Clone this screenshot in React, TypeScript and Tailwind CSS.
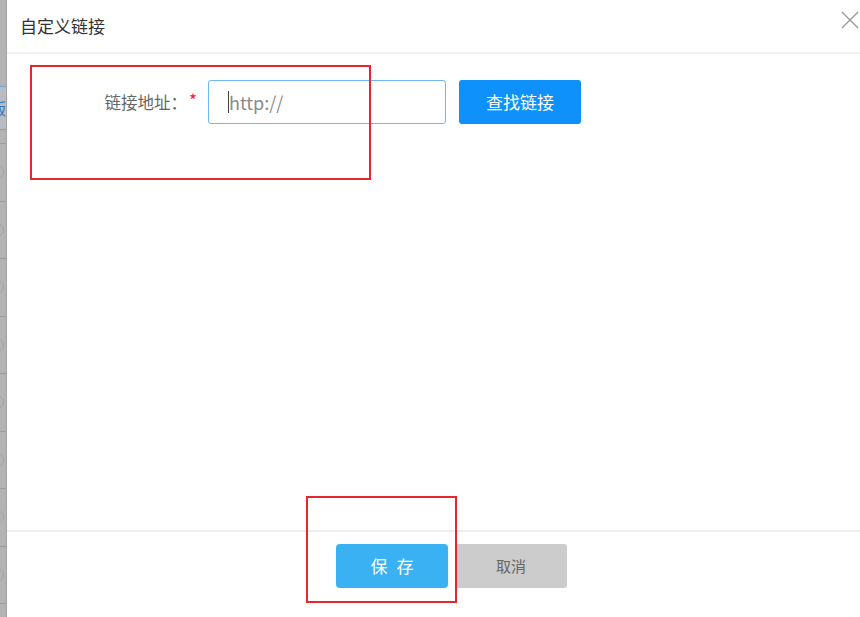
import React from "react";

export default function App() {
  const font = { fontFamily: '"Noto Sans CJK SC", "Noto Sans", sans-serif' };
  return (
    <div className="relative flex h-[617px] w-[860px] overflow-hidden bg-white" style={font}>
      {/* left background strip */}
      <div className="flex h-full w-[7px] shrink-0 flex-col overflow-hidden border-r border-[#a2a2a2] bg-[#b3b3b3]">
        <div className="h-[86px] shrink-0" />
        <div className="flex h-[44px] shrink-0 items-center border-y border-[#6fa6d8] bg-[#b8bcc2]">
          <span className="ml-[-10px] text-[16px] leading-none text-[#2f78c4]">版</span>
        </div>
        <div className="h-[14px] shrink-0 border-b border-[#9a9a9a]" />
        {Array.from({ length: 8 }).map((_, i) => (
          <div key={i} className="flex h-[57.5px] shrink-0 items-center border-b border-[#9c9c9c]">
            <div className="ml-[-10px] h-[14px] w-[14px] rounded-full border border-[#a5a5a5]" />
          </div>
        ))}
      </div>

      {/* dialog */}
      <div className="flex min-w-0 flex-1 flex-col bg-white">
        <div className="flex h-[54px] shrink-0 items-center justify-between border-b-2 border-[#f2f2f2] pl-[13px]">
          <span className="text-[17px] text-[#333]">自定义链接</span>
          <svg width="18" height="18" viewBox="0 0 18 18" className="mr-[1px] mt-[-12px]">
            <path d="M1 1 L17 17 M17 1 L1 17" stroke="#9a9a9a" strokeWidth="1.4" fill="none" />
          </svg>
        </div>

        <div className="flex-1">
          <div className="mt-[26px] flex items-center">
            <div className="flex w-[201px] shrink-0 items-center justify-end pr-[11px]">
              <span className="text-[16.5px] leading-none text-[#666]">链接地址：</span>
              <span className="ml-[2px] mt-[-6px] text-[17px] leading-none text-[#e8262e]">*</span>
            </div>
            <div className="flex h-[44px] w-[238px] items-center rounded-[3px] border border-[#6db7f4] pl-[19px]">
              <span className="h-[22px] w-px bg-[#444]" />
              <span className="text-[18px] leading-none text-[#8a8a8a]">http://</span>
            </div>
            <button className="ml-[13px] flex h-[44px] w-[122px] items-center justify-center rounded-[3px] bg-[#0f91fb] text-[17px] text-white">
              查找链接
            </button>
          </div>
        </div>

        <div className="flex h-[87px] shrink-0 items-start border-t-2 border-[#eeeeee] pl-[329px] pt-[12px]">
          <button className="flex h-[44px] w-[112px] items-center justify-center gap-[9px] rounded-[4px] bg-[#3ab1f2] text-[17px] text-white">
            <span>保</span>
            <span>存</span>
          </button>
          <button className="ml-[7px] flex h-[44px] w-[112px] items-center justify-center rounded-[3px] bg-[#cccccc] text-[15px] text-[#666]">
            取消
          </button>
        </div>
      </div>

      {/* annotation boxes */}
      <div className="pointer-events-none absolute left-[30px] top-[65px] h-[115px] w-[341px] border-2 border-[#e8262e]" />
      <div className="pointer-events-none absolute left-[306px] top-[496px] h-[107px] w-[151px] border-2 border-[#e8262e]" />
    </div>
  );
}
